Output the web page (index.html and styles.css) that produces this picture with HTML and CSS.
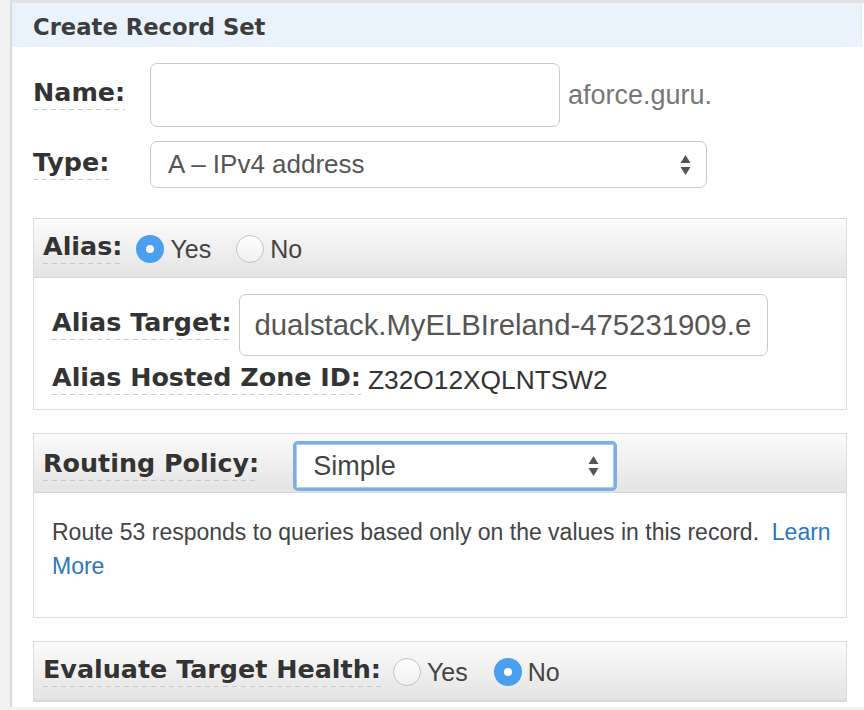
FILE: index.html
```html
<!DOCTYPE html>
<html>
<head>
<meta charset="utf-8">
<link rel="stylesheet" href="styles.css">
</head>
<body>
<div class="frame">
  <div class="hdr">Create Record Set</div>
  <div class="content">
    <div class="row row-name">
      <span class="lcol"><span class="lbl">Name:</span></span>
      <div class="input name-input"></div>
      <span class="suffix">aforce.guru.</span>
    </div>
    <div class="row row-type">
      <span class="lcol"><span class="lbl">Type:</span></span>
      <div class="select type-select">
        <span class="sel-text">A – IPv4 address</span>
        <svg class="arrows" width="11" height="22" viewBox="0 0 11 22"><path d="M5.5 1 L10.5 9 L0.5 9 Z M0.5 13 L10.5 13 L5.5 21 Z" fill="#555"/></svg>
      </div>
    </div>

    <div class="panel alias-panel">
      <div class="phead">
        <span class="lbl">Alias:</span>
        <span class="radio on radio-first"></span><span class="rtext">Yes</span>
        <span class="radio radio-second"></span><span class="rtext">No</span>
      </div>
      <div class="alias-body">
        <div class="target-row">
          <span class="lbl">Alias Target:</span>
          <div class="input target-input"><span class="target-text">dualstack.MyELBIreland-475231909.e</span></div>
        </div>
        <div class="zone-row">
          <span class="lbl">Alias Hosted Zone ID:</span>
          <span class="zone-val">Z32O12XQLNTSW2</span>
        </div>
      </div>
    </div>

    <div class="panel routing-panel">
      <div class="phead routing-head">
        <span class="lbl">Routing Policy:</span>
        <div class="select focus-select">
          <span class="sel-text simple">Simple</span>
          <svg class="arrows" width="11" height="22" viewBox="0 0 11 22"><path d="M5.5 1 L10.5 9 L0.5 9 Z M0.5 13 L10.5 13 L5.5 21 Z" fill="#555"/></svg>
        </div>
      </div>
      <div class="routing-body">
        <span class="desc">Route 53 responds to queries based only on the values in this record.&nbsp; <a class="link">Learn</a></span><br><a class="link">More</a>
      </div>
    </div>

    <div class="panel eval-panel">
      <div class="phead">
        <span class="lbl">Evaluate Target Health:</span>
        <span class="radio eval-first"></span><span class="rtext">Yes</span>
        <span class="radio on radio-second eval-second"></span><span class="rtext">No</span>
      </div>
    </div>
  </div>
</div>
</body>
</html>
```
FILE: styles.css
```css
html, body {
  margin: 0;
  padding: 0;
}
body {
  background: #f2f2f2;
  font-family: "Liberation Sans", Arial, sans-serif;
  color: #444;
  width: 864px;
  height: 710px;
  overflow: hidden;
}
.frame {
  margin-left: 10px;
  border-left: 2px solid #dadada;
  border-top: 3px solid #e3e3e3;
  background: #fff;
  height: 707px;
  box-sizing: border-box;
}
.hdr {
  height: 44px;
  box-sizing: border-box;
  padding: 4px 0 0 21px;
  background: #eaf3fc;
  display: flex;
  align-items: center;
  font-family: "DejaVu Sans", Verdana, sans-serif;
  font-weight: bold;
  font-size: 22.7px;
  color: #3d3d3d;
  margin-right: 2px;
  border-right: 1px solid #e2ebf3;
}
.content {
  padding: 16px 17px 0 21px;
}
.lbl {
  font-family: "DejaVu Sans", Verdana, sans-serif;
  font-weight: bold;
  font-size: 25.4px;
  line-height: 25px;
  color: #333;
  padding-bottom: 5px;
  background-image: linear-gradient(to right, #cacaca 0 5px, transparent 5px 9px);
  background-size: 9px 1px;
  background-repeat: repeat-x;
  background-position: left bottom;
  white-space: nowrap;
}
.row {
  display: flex;
  align-items: center;
}
.lcol {
  width: 117px;
  display: flex;
}
.input {
  box-sizing: border-box;
  border: 1px solid #c9c9c9;
  border-radius: 7px;
  background: #fff;
}
.name-input {
  width: 410px;
  height: 64px;
}
.suffix {
  margin-left: 8px;
  font-size: 27px;
  color: #777;
}
.row-type {
  margin-top: 14px;
}
.select {
  box-sizing: border-box;
  border: 1px solid #c9c9c9;
  border-radius: 7px;
  background: #fff;
  display: flex;
  align-items: center;
  justify-content: space-between;
}
.type-select {
  width: 557px;
  height: 47px;
  padding: 0 15px 0 17px;
}
.sel-text {
  font-size: 26px;
  color: #555;
}
.panel {
  border: 1px solid #dcdcdc;
}
.alias-panel {
  margin-top: 30px;
}
.phead {
  height: 59px;
  box-sizing: border-box;
  border-bottom: 1px solid #d8d8d8;
  background: linear-gradient(#fbfbfb, #e4e4e4);
  display: flex;
  align-items: center;
  padding-left: 9px;
  padding-top: 2px;
}
.radio {
  width: 28px;
  height: 28px;
  box-sizing: border-box;
  border-radius: 50%;
  border: 1px solid #c4c4c4;
  background: linear-gradient(#ffffff, #f0f0f0);
  flex: none;
  position: relative;
}
.radio.on {
  border: none;
  background: #4a9ff0;
}
.radio.on::after {
  content: "";
  position: absolute;
  left: 10px;
  top: 10px;
  width: 8px;
  height: 8px;
  border-radius: 50%;
  background: #fff;
}
.radio-first {
  margin-left: 14px;
}
.radio-second {
  margin-left: 25px;
}
.rtext {
  margin-left: 6px;
  font-size: 25px;
  color: #444;
}
.alias-body {
  padding: 16px 18px 14px 18px;
}
.target-row {
  display: flex;
  align-items: center;
}
.target-input {
  margin-left: 7px;
  width: 529px;
  height: 62px;
  display: flex;
  align-items: center;
  padding-left: 15px;
  overflow: hidden;
}
.target-text {
  font-size: 29.3px;
  color: #555;
  white-space: nowrap;
}
.zone-row {
  margin-top: 9px;
  height: 30px;
  display: flex;
  align-items: center;
}
.zone-val {
  margin-left: 7px;
  font-size: 26.3px;
  color: #333;
}
.routing-panel {
  margin-top: 23px;
}
.routing-head {
  padding-top: 6px;
}
.focus-select {
  margin-left: 34px;
  width: 324px;
  height: 50px;
  border: 3px solid #79aee6;
  border-radius: 5px;
  box-shadow: inset 0 0 0 1px #a9cbef;
  padding: 0 15px 0 17px;
}
.simple {
  font-size: 27px;
  color: #444;
}
.routing-body {
  padding: 22px 15px 34px 18px;
  font-size: 23px;
  line-height: 34px;
  color: #444;
  height: 68px;
}
.link {
  color: #2b77c0;
}
.eval-panel {
  margin-top: 23px;
}
.eval-first {
  margin-left: 12px;
}
.eval-second {
  margin-left: 26px;
}
```
